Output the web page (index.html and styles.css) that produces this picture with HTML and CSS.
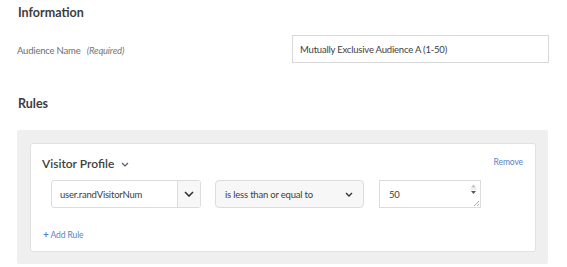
FILE: index.html
```html
<!DOCTYPE html>
<html lang="en">
<head>
  <meta charset="UTF-8">
  <title>Audience</title>
  <link rel="stylesheet" href="styles.css">
</head>
<body>

  <div class="page">
    <h2>Information</h2>

    <div class="field-row">
      <label for="audienceName">Audience Name <em>(Required)</em></label>
      <input type="text" id="audienceName" class="text-input" value="Mutually Exclusive Audience A (1-50)">
    </div>

    <h2 class="rules-title">Rules</h2>

    <div class="rules-box">
      <div class="rule-card">
        <div class="card-head">
          <span class="card-title">Visitor Profile
            <svg class="title-chevron" width="8" height="5" viewBox="0 0 8 5"><path d="M1 1l3 3 3-3" fill="none" stroke="#555" stroke-width="1.1"/></svg>
          </span>
          <a href="#" class="link remove-link">Remove</a>
        </div>

        <div class="rule-row">
          <div class="combo">
            <span class="combo-value">user.randVisitorNum</span>
            <span class="combo-btn">
              <svg width="10" height="6" viewBox="0 0 10 6"><path d="M1 1l4 4 4-4" fill="none" stroke="#333" stroke-width="1.6"/></svg>
            </span>
          </div>

          <div class="select-box">
            <span>is less than or equal to</span>
            <svg width="8" height="5" viewBox="0 0 8 5"><path d="M1 1l3 3 3-3" fill="none" stroke="#333" stroke-width="1.4"/></svg>
          </div>

          <div class="number-box">
            <span>50</span>
            <span class="spinner">
              <svg width="7" height="12" viewBox="0 0 7 12"><path d="M3.5 1.5l2.5 3h-5z" fill="#c4c4c4"/><path d="M1 8h5l-2.5 3z" fill="#555"/><path d="M0.5 6h6" stroke="#ddd" stroke-width="1"/></svg>
            </span>
            <span class="resize">
              <svg width="6" height="6" viewBox="0 0 6 6"><path d="M6 1L1 6M6 4L4 6" stroke="#999" stroke-width="0.8"/></svg>
            </span>
          </div>
        </div>

        <a href="#" class="link add-rule"><b>+</b> Add Rule</a>
      </div>
    </div>
  </div>

</body>
</html>
```

FILE: styles.css
```css
body {
  margin: 0;
  font-family: Lato, "Liberation Sans", sans-serif;
  background: #fff;
  color: #4b4b4b;
}

.page {
  width: 532px;
  padding: 5px 18px 0 17px;
}

h2 {
  margin: 0;
  font-size: 12.5px;
  font-weight: bold;
  color: #3d3d3d;
  line-height: 16px;
  padding-left: 1px;
}

.field-row {
  display: flex;
  align-items: center;
  justify-content: space-between;
  margin-top: 14px;
}

label {
  font-size: 9.5px;
  letter-spacing: -0.2px;
  color: #6e6e6e;
  padding-top: 3px;
}

label em {
  margin-left: 4px;
  color: #7a7a7a;
}

.text-input {
  width: 241px;
  height: 26px;
  padding: 0 7px;
  border: 1px solid #d8d8d8;
  font-family: inherit;
  font-size: 9.5px;
  letter-spacing: -0.2px;
  color: #404040;
  box-sizing: content-box;
}

.rules-title {
  margin-top: 33px;
}

.rules-box {
  margin-top: 18px;
  width: 531px;
  height: 134px;
  background: #efefef;
  border-radius: 2px;
  padding: 13px 12px 0 13px;
  box-sizing: border-box;
}

.rule-card {
  background: #fff;
  border: 1px solid #e1e1e1;
  border-radius: 3px;
  height: 109px;
  box-sizing: border-box;
  padding: 12px 11px 0 11px;
}

.card-head {
  display: flex;
  justify-content: space-between;
  align-items: center;
}

.card-title {
  font-size: 12px;
  font-weight: 600;
  color: #3f3f3f;
}

.title-chevron {
  margin-left: 4px;
  vertical-align: middle;
}

.link {
  color: #5b7fc7;
  text-decoration: none;
  font-size: 8.5px;
  letter-spacing: -0.1px;
}

.remove-link {
  margin-top: -3px;
  margin-right: 1px;
}

.rule-row {
  display: flex;
  align-items: center;
  margin-top: 9px;
  padding-left: 9px;
  font-size: 9.5px;
  letter-spacing: -0.2px;
  color: #404040;
}

.combo {
  display: flex;
  width: 150px;
  height: 28px;
  border: 1px solid #dcdcdc;
  border-radius: 3px;
  box-sizing: border-box;
}

.combo-value {
  flex: 1;
  display: flex;
  align-items: center;
  padding-left: 8px;
  border-right: 1px solid #dcdcdc;
}

.combo-btn {
  width: 22px;
  display: flex;
  align-items: center;
  justify-content: center;
  background: #f7f7f7;
}

.select-box {
  display: flex;
  align-items: center;
  justify-content: space-between;
  width: 149px;
  height: 28px;
  margin-left: 14px;
  padding: 0 10px 0 9px;
  border: 1px solid #dcdcdc;
  border-radius: 4px;
  background: #f7f7f7;
  box-sizing: border-box;
}

.number-box {
  position: relative;
  display: flex;
  align-items: center;
  width: 102px;
  height: 28px;
  margin-left: 15px;
  padding-left: 9px;
  border: 1px solid #dcdcdc;
  box-sizing: border-box;
}

.spinner {
  position: absolute;
  right: 3px;
  top: 2px;
}

.resize {
  position: absolute;
  right: 1px;
  bottom: 1px;
  line-height: 0;
}

.add-rule {
  display: inline-block;
  margin-top: 20px;
  margin-left: 1px;
}

.add-rule b {
  font-size: 10px;
}
```
